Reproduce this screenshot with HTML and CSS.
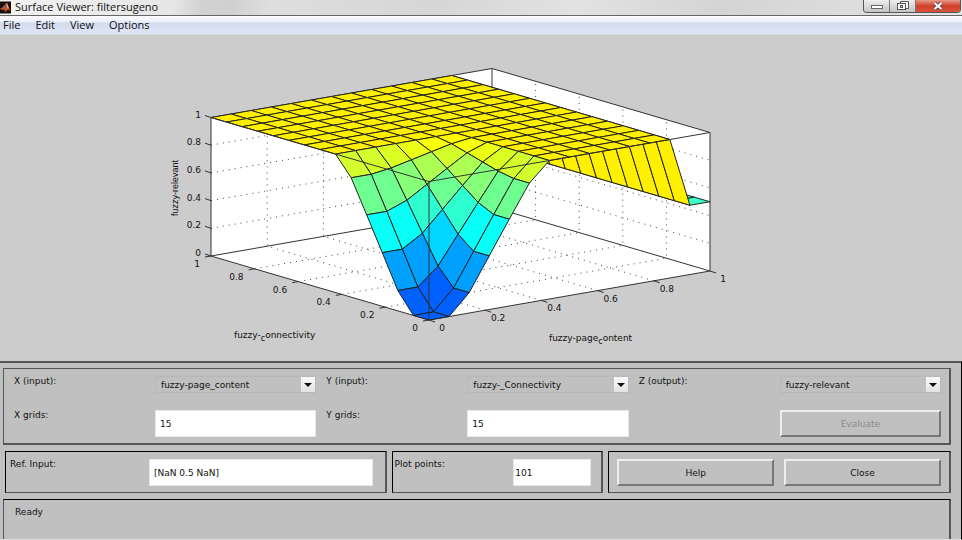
FILE: index.html
```html
<!DOCTYPE html>
<html lang="en">
<head>
    <meta charset="UTF-8">
    <meta name="viewport" content="width=device-width, initial-scale=1.0">
    <title>Surface Viewer: filtersugeno</title>
    <link rel="stylesheet" href="styles.css">
</head>
<body>

    <header class="title-bar">
        <svg class="logo" viewBox="0 0 11 12" aria-hidden="true">
            <rect width="11" height="12" fill="#1a0f0c"/>
            <path d="M0 7 L3 5.5 L6 2 L7 1.5 L10.5 9.5 L8 8 L5.5 10.5 L4 8 L2 8.5 Z" fill="#c5531c"/>
            <path d="M3 5.5 L6 2 L5.5 6 L4 8 Z" fill="#5b6f80"/>
            <path d="M6.5 2 L7 1.5 L8.5 6 L7.5 7.5 Z" fill="#f7b277"/>
        </svg>
        <h1>Surface Viewer: filtersugeno</h1>
        <div class="window-buttons">
            <button class="minimize" aria-label="Minimize">
                <svg viewBox="0 0 14 10"><rect x="1.5" y="4.5" width="11" height="3" fill="#fff" stroke="#666"/></svg>
            </button>
            <button class="restore" aria-label="Restore">
                <svg viewBox="0 0 14 10">
                    <path d="M4.5 2.5 V.5 H12.5 V7.5 H10" fill="#fff" stroke="#555"/>
                    <rect x="1.5" y="2.5" width="8" height="6" fill="#fff" stroke="#555"/>
                    <rect x="4.5" y="4.5" width="2" height="2" fill="#ddd" stroke="#555"/>
                </svg>
            </button>
            <button class="close" aria-label="Close window">
                <svg viewBox="0 0 14 10">
                    <path d="M3.5 2 L10.5 8 M10.5 2 L3.5 8" stroke="#6b4a48" stroke-width="4"/>
                    <path d="M3.5 2 L10.5 8 M10.5 2 L3.5 8" stroke="#fff" stroke-width="2"/>
                </svg>
            </button>
        </div>
    </header>

    <nav class="menu-bar">
        <a href="#file">File</a>
        <a href="#edit">Edit</a>
        <a href="#view">View</a>
        <a href="#options">Options</a>
    </nav>

    <main class="viewer">
        <svg class="plot" id="plot" viewBox="0 35 962 326" role="img" aria-label="Surface plot">
            <g id="axes"></g>
            <g id="surface"></g>
            <g id="frame"></g>
            <g id="labels"></g>
            <text class="axis-name" x="234" y="338">fuzzy-<tspan class="sub" dy="3">c</tspan><tspan dy="-3">onnectivity</tspan></text>
            <text class="axis-name" x="549" y="341">fuzzy-page<tspan class="sub" dy="3">c</tspan><tspan dy="-3">ontent</tspan></text>
            <text class="axis-name z-name" transform="translate(178 216) rotate(-90)">fuzzy-relevant</text>
        </svg>

        <form class="controls">
            <div class="panel grids">
                <div class="field">
                    <label for="x-input">X (input):</label>
                    <div class="dropdown">
                        <select id="x-input"><option>fuzzy-page_content</option></select>
                    </div>
                </div>
                <div class="field">
                    <label for="y-input">Y (input):</label>
                    <div class="dropdown">
                        <select id="y-input"><option>fuzzy-_Connectivity</option></select>
                    </div>
                </div>
                <div class="field">
                    <label for="z-output">Z (output):</label>
                    <div class="dropdown">
                        <select id="z-output"><option>fuzzy-relevant</option></select>
                    </div>
                </div>
                <div class="field">
                    <label for="x-grids">X grids:</label>
                    <input type="text" id="x-grids" value="15">
                </div>
                <div class="field">
                    <label for="y-grids">Y grids:</label>
                    <input type="text" id="y-grids" value="15">
                </div>
                <div class="field evaluate">
                    <button type="button" class="push" disabled>Evaluate</button>
                </div>
            </div>

            <div class="row">
                <div class="panel ref">
                    <label for="ref-input">Ref. Input:</label>
                    <input type="text" id="ref-input" value="[NaN 0.5 NaN]">
                </div>
                <div class="panel points">
                    <label for="plot-points">Plot points:</label>
                    <input type="text" id="plot-points" value="101">
                </div>
                <div class="panel actions">
                    <button type="button" class="push">Help</button>
                    <button type="button" class="push">Close</button>
                </div>
            </div>

            <div class="panel status">Ready</div>
        </form>
    </main>

    <script src="plot.js"></script>
</body>
</html>
```
FILE: styles.css
```css
* {
    margin: 0;
    padding: 0;
    box-sizing: border-box;
}

body {
    display: flex;
    flex-direction: column;
    min-height: 100vh;
    background: #ccc;
    color: #111;
    font-family: "DejaVu Sans", sans-serif;
    font-size: 9px;
    line-height: 10px;
}

button,
input,
select {
    font: inherit;
    color: inherit;
    border-radius: 0;
}

/* Title bar */
.title-bar {
    display: flex;
    align-items: flex-start;
    gap: 4px;
    height: 16px;
    border-bottom: 1px solid #666;
    background: linear-gradient(100deg, #f2f2f2 0%, #e6e6e6 18%, #d2d2d2 21%, #d0d0d0 24%, #dedede 28%, #d6d6d6 45%, #e2e2e2 60%, #d4d4d4 75%, #e4e4e4 100%);
}

.logo {
    width: 11px;
    height: 13px;
    margin-top: 1px;
}

.title-bar h1 {
    flex: 1;
    font-family: "Open Sans", sans-serif;
    font-size: 11px;
    font-weight: normal;
    line-height: 14px;
}

.window-buttons {
    display: flex;
    height: 13px;
    margin-right: 1px;
    border: 1px solid #555;
    border-top: none;
    border-radius: 0 0 4px 4px;
    overflow: hidden;
}

.window-buttons button {
    display: flex;
    justify-content: center;
    align-items: center;
    width: 26px;
    border: none;
    border-right: 1px solid #777;
    background: linear-gradient(#eee, #c4c4c4);
}

.window-buttons svg {
    width: 14px;
    height: 10px;
}

.window-buttons .close {
    width: 44px;
    border-right: none;
    background: linear-gradient(#e59a8c, #cf3f28 50%, #d9553c);
}

/* Menu bar */
.menu-bar {
    display: flex;
    gap: 15px;
    height: 19px;
    padding-left: 3px;
    background: linear-gradient(#fbfcff, #eef1fa 30%, #d3dbee 40%, #dfe5f5);
    border-bottom: 1px solid #d8d8d8;
}

.menu-bar a {
    color: inherit;
    font-family: "Open Sans", sans-serif;
    font-size: 11px;
    line-height: 18px;
    text-decoration: none;
}

.viewer {
    flex: 1;
    display: flex;
    flex-direction: column;
}

/* Plot */
.plot {
    display: block;
    width: 100%;
}

.wall {
    fill: #fff;
}

.grid-line {
    fill: none;
    stroke: #444;
    stroke-dasharray: 1 5;
}

.edge {
    fill: none;
    stroke: #333;
}

.cell {
    stroke: #222;
    stroke-linejoin: round;
}

.tick-label,
.axis-name {
    fill: #111;
    font-size: 9px;
}

.axis-name .sub {
    font-size: 8px;
}

.z-name {
    font-family: "Liberation Sans", sans-serif;
}

/* Controls */
.controls {
    flex: 1;
    display: flex;
    flex-direction: column;
    gap: 6px;
    padding: 5px 10px 0 3px;
    border-top: 2px solid #555;
    border-right: 1px solid #000;
    border-bottom: 1px solid #ddd;
    background: #c0c0c0;
}

.panel {
    border: 1px solid #555;
    border-right-width: 2px;
}

.controls input {
    min-width: 0;
    height: 27px;
    padding: 0 4px;
    border: 1px solid #e6e6e6;
    background: #fff;
}

.grids {
    display: grid;
    grid-template-columns: repeat(3, 1fr);
    gap: 17px 10px;
    padding: 7px 8px 6px 10px;
    border-bottom-width: 2px;
}

.field {
    display: flex;
    align-items: flex-start;
}

.field label {
    width: 141px;
}

.field input,
.dropdown {
    flex: 1;
}

.dropdown {
    position: relative;
}

.dropdown select {
    display: block;
    width: 100%;
    height: 17px;
    padding: 0 20px 0 5px;
    border: 1px solid #b8b8b8;
    background: #c0c0c0;
    appearance: none;
}

/* Arrow lies over the right end of the select */
.dropdown::before {
    content: "";
    position: absolute;
    top: 1px;
    right: 1px;
    width: 14px;
    height: 15px;
    background: linear-gradient(#fafafa, #e2e2e2);
    pointer-events: none;
}

.dropdown::after {
    content: "";
    position: absolute;
    top: 7px;
    right: 4px;
    border: 4px solid transparent;
    border-top-color: #111;
    border-bottom: none;
    pointer-events: none;
}

.evaluate {
    padding-left: 141px;
}

.push {
    flex: 1;
    height: 27px;
    border: 2px solid;
    border-color: #eee #777 #777 #eee;
    background: #c0c0c0;
}

.push:disabled {
    color: #8c8c8c;
}

.row {
    display: grid;
    grid-template-columns: 382fr 212fr 343fr;
    gap: 5px;
    padding-left: 2px;
}

.row .panel {
    display: flex;
    align-items: flex-start;
    padding: 7px 0 6px;
    border-top-color: #000;
    border-left-color: #000;
}

.ref label {
    width: 143px;
    padding-left: 4px;
}

.row .ref {
    padding-right: 12px;
}

.ref input {
    flex: 1;
}

.row .points {
    padding-right: 10px;
}

.points label {
    flex: 1;
    padding-left: 2px;
}

.points input {
    width: 78px;
    padding: 0 1px;
}

.row .actions {
    gap: 10px;
    padding-left: 8px;
    padding-right: 8px;
}

.status {
    flex: 1;
    padding: 7px 11px;
    border-top-color: #000;
    border-bottom: none;
}
```
FILE: plot.js
```javascript
const NS = 'http://www.w3.org/2000/svg';
const CELLS = 14;
const ticks = [0.2, 0.4, 0.6, 0.8];

const axes = document.getElementById('axes');
const surface = document.getElementById('surface');
const frame = document.getElementById('frame');
const labels = document.getElementById('labels');

// Data coordinates (0..1) to drawing coordinates
function project(x, y, z) {
    return [429 + 281 * x - 218 * y, 320 - 49 * x - 64 * y - 138.5 * z];
}

function add(parent, tag, attrs, text) {
    const el = document.createElementNS(NS, tag);
    for (const name in attrs) {
        el.setAttribute(name, attrs[name]);
    }
    if (text !== undefined) {
        el.textContent = text;
    }
    parent.appendChild(el);
}

function line(parent, cls, ...points) {
    add(parent, 'polyline', { class: cls, points: points.map(p => project(...p)).join(' ') });
}

// Walls and floor
const outline = [[0, 1, 1], [1, 1, 1], [1, 0, 1], [1, 0, 0], [0, 0, 0], [0, 1, 0]];
add(axes, 'polygon', { class: 'wall', points: outline.map(p => project(...p)).join(' ') });

ticks.forEach(t => {
    line(axes, 'grid-line', [0, 1, t], [1, 1, t], [1, 0, t]);
    line(axes, 'grid-line', [t, 0, 0], [t, 1, 0], [t, 1, 1]);
    line(axes, 'grid-line', [0, t, 0], [1, t, 0], [1, t, 1]);
});

line(axes, 'edge', ...outline, outline[0]);
line(axes, 'edge', [0, 1, 0], [1, 1, 0], [1, 0, 0]);
line(axes, 'edge', [1, 1, 0], [1, 1, 1]);

// Output level along one input, the other one being 0
const rise = [0, 0, 0.147, 0.387, 0.627, 0.862];

function level(i) {
    return i < rise.length ? rise[i] : 1;
}

function height(i, j) {
    if (i > 12) {
        return 0.5;
    }
    return 1 - (1 - level(i)) * (1 - level(j));
}

// Jet colormap
function color(z) {
    const v = 0.22 + 0.42 * z;
    const channel = center => Math.round(255 * Math.max(0, Math.min(1, 1.5 - Math.abs(4 * v - center))));
    return `rgb(${channel(3)}, ${channel(2)}, ${channel(1)})`;
}

// Far cells first
for (let i = CELLS - 1; i >= 0; i--) {
    for (let j = CELLS - 1; j >= 0; j--) {
        const corners = [[i, j], [i + 1, j], [i + 1, j + 1], [i, j + 1]];
        add(surface, 'polygon', {
            class: 'cell',
            fill: color(height(i, j)),
            points: corners.map(([a, b]) => project(a / CELLS, b / CELLS, height(a, b))).join(' ')
        });
    }
}

// Front edges of the box
line(frame, 'edge', [0, 1, 1], [0, 0, 1], [1, 0, 1]);
line(frame, 'edge', [0, 0, 0], [0, 0, 1]);

// Ticks and their labels
[0, ...ticks, 1].forEach(t => {
    const [xx, xy] = project(t, 0, 0);
    const [yx, yy] = project(0, t, 0);
    const [zx, zy] = project(0, 1, t);

    add(labels, 'line', { class: 'edge', x1: xx, y1: xy, x2: xx + 6, y2: xy + 2 });
    add(labels, 'line', { class: 'edge', x1: yx, y1: yy, x2: yx - 6, y2: yy + 1 });
    add(labels, 'line', { class: 'edge', x1: zx, y1: zy, x2: zx - 6, y2: zy - 2 });

    add(labels, 'text', { class: 'tick-label', 'text-anchor': 'middle', x: xx + 13, y: xy + 11 }, t);
    add(labels, 'text', { class: 'tick-label', 'text-anchor': 'end', x: yx - 11, y: yy + 11 }, t);
    add(labels, 'text', { class: 'tick-label', 'text-anchor': 'end', x: zx - 10, y: zy }, t);
});
```
